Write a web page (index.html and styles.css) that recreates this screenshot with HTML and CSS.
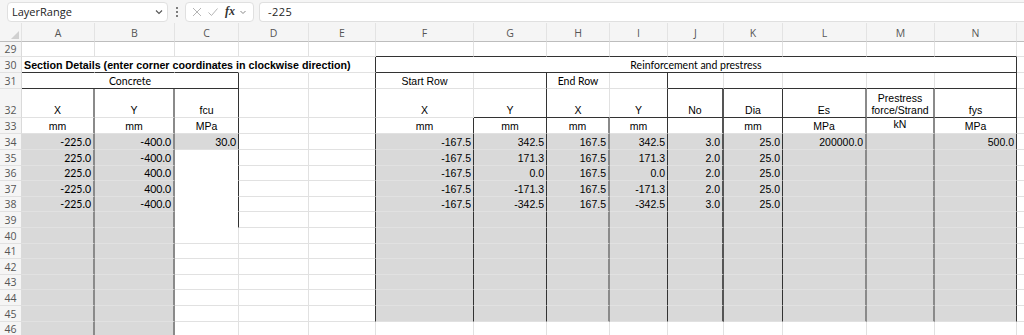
FILE: index.html
```html
<!DOCTYPE html>
<html lang="en">
<head>
    <meta charset="UTF-8">
    <title>LayerRange</title>
    <link rel="stylesheet" href="styles.css">
</head>
<body>

<div class="toolbar">
    <div class="namebox">
        <span>LayerRange</span>
        <svg class="chev" width="10" height="10" viewBox="0 0 10 10"><path d="M2 3.5 L5 6.5 L8 3.5" fill="none" stroke="#555" stroke-width="1.1"/></svg>
    </div>
    <svg class="dots" width="4" height="12" viewBox="0 0 4 12"><circle cx="2" cy="2" r="1"/><circle cx="2" cy="6" r="1"/><circle cx="2" cy="10" r="1"/></svg>
    <div class="fxbox">
        <svg width="12" height="12" viewBox="0 0 12 12"><path d="M2 2 L10 10 M10 2 L2 10" stroke="#b5b5b5" stroke-width="1"/></svg>
        <svg width="12" height="12" viewBox="0 0 12 12"><path d="M1.5 6.5 L4.5 9.5 L10.5 2.5" fill="none" stroke="#b5b5b5" stroke-width="1"/></svg>
        <span class="fx">fx</span>
        <svg width="8" height="8" viewBox="0 0 8 8"><path d="M1.5 3 L4 5.5 L6.5 3" fill="none" stroke="#888" stroke-width="1"/></svg>
    </div>
    <div class="formula">-225</div>
</div>

<table class="sheet">
    <colgroup>
        <col class="c-rh">
        <col style="width:73px"><col style="width:80px"><col style="width:64px"><col style="width:70px"><col style="width:67px">
        <col style="width:98px"><col style="width:73px"><col style="width:63px"><col style="width:58px"><col style="width:56px">
        <col style="width:59px"><col style="width:84px"><col style="width:68px"><col style="width:82px"><col style="width:30px">
    </colgroup>
    <tr class="hdr">
        <th class="corner"><svg width="8" height="8" viewBox="0 0 8 8"><path d="M8 0 L8 8 L0 8 Z" fill="#d0d0d0"/></svg></th>
        <th>A</th><th>B</th><th>C</th><th>D</th><th>E</th><th>F</th><th>G</th><th>H</th>
        <th>I</th><th>J</th><th>K</th><th>L</th><th>M</th><th>N</th><th></th>
    </tr>
    <tr class="r15">
        <th>29</th>
        <td></td><td></td><td></td><td></td><td></td>
        <td class="bb"></td><td class="bb"></td><td class="bb"></td><td class="bb"></td><td class="bb"></td>
        <td class="bb"></td><td class="bb"></td><td class="bb"></td><td class="bb"></td><td></td>
    </tr>
    <tr class="r16">
        <th>30</th>
        <td class="bb nor title">Section Details (enter corner coordinates in clockwise direction)</td>
        <td class="bb nor"></td><td class="bb nor"></td><td class="nor"></td><td class="br"></td>
        <td colspan="9" class="br bb cal center">Reinforcement and prestress</td>
        <td></td>
    </tr>
    <tr class="r16">
        <th>31</th>
        <td colspan="3" class="br bb cal center">Concrete</td>
        <td></td><td class="br"></td>
        <td class="center">Start Row</td><td class="br"></td>
        <td class="cal center">End Row</td><td class="br"></td>
        <td class="bb"></td><td class="bb"></td><td class="bb"></td><td class="bb"></td><td class="bb br"></td>
        <td></td>
    </tr>
    <tr class="r29">
        <th>32</th>
        <td class="bm center">X</td><td class="bm center">Y</td><td class="br center">fcu</td>
        <td></td><td class="br"></td>
        <td class="center">X</td><td class="br bb center">Y</td><td class="bb center">X</td><td class="br bb center">Y</td>
        <td class="bd bb center">No</td><td class="br bb center">Dia</td><td class="bm bb center">Es</td>
        <td class="bm bb center">Prestress<br>force/Strand</td><td class="br bb center">fys</td>
        <td></td>
    </tr>
    <tr class="r16">
        <th>33</th>
        <td class="bm center">mm</td><td class="bm center">mm</td><td class="br center">MPa</td>
        <td></td><td class="br"></td>
        <td class="br center">mm</td><td class="br center">mm</td><td class="bm center">mm</td><td class="br center">mm</td>
        <td class="bd"></td><td class="br center">mm</td><td class="bm center">MPa</td>
        <td class="bm center kn">kN</td><td class="br center">MPa</td>
        <td></td>
    </tr>
    <tr class="r16">
        <th>34</th>
        <td class="fill bm cal num">-225.0</td><td class="fill bm cal num">-400.0</td><td class="fill br cal num">30.0</td>
        <td></td><td class="br"></td>
        <td class="fill br num">-167.5</td><td class="fill br num">342.5</td><td class="fill bm num">167.5</td><td class="fill br num">342.5</td>
        <td class="fill bd num">3.0</td><td class="fill br num">25.0</td><td class="fill bm num">200000.0</td>
        <td class="fill bm"></td><td class="fill br num">500.0</td>
        <td></td>
    </tr>
    <tr class="r15">
        <th>35</th>
        <td class="fill bm cal num">225.0</td><td class="fill bm cal num">-400.0</td><td class="blank br"></td>
        <td></td><td class="br"></td>
        <td class="fill br num">-167.5</td><td class="fill br num">171.3</td><td class="fill bm num">167.5</td><td class="fill br num">171.3</td>
        <td class="fill bd num">2.0</td><td class="fill br num">25.0</td><td class="fill bm"></td>
        <td class="fill bm"></td><td class="fill br"></td>
        <td></td>
    </tr>
    <tr class="r16">
        <th>36</th>
        <td class="fill bm cal num">225.0</td><td class="fill bm cal num">400.0</td><td class="blank br"></td>
        <td></td><td class="br"></td>
        <td class="fill br num">-167.5</td><td class="fill br num">0.0</td><td class="fill bm num">167.5</td><td class="fill br num">0.0</td>
        <td class="fill bd num">2.0</td><td class="fill br num">25.0</td><td class="fill bm"></td>
        <td class="fill bm"></td><td class="fill br"></td>
        <td></td>
    </tr>
    <tr class="r15">
        <th>37</th>
        <td class="fill bm cal num">-225.0</td><td class="fill bm cal num">400.0</td><td class="blank br"></td>
        <td></td><td class="br"></td>
        <td class="fill br num">-167.5</td><td class="fill br num">-171.3</td><td class="fill bm num">167.5</td><td class="fill br num">-171.3</td>
        <td class="fill bd num">2.0</td><td class="fill br num">25.0</td><td class="fill bm"></td>
        <td class="fill bm"></td><td class="fill br"></td>
        <td></td>
    </tr>
    <tr class="r16">
        <th>38</th>
        <td class="fill bm cal num">-225.0</td><td class="fill bm cal num">-400.0</td><td class="blank br"></td>
        <td></td><td class="br"></td>
        <td class="fill br num">-167.5</td><td class="fill br num">-342.5</td><td class="fill bm num">167.5</td><td class="fill br num">-342.5</td>
        <td class="fill bd num">3.0</td><td class="fill br num">25.0</td><td class="fill bm"></td>
        <td class="fill bm"></td><td class="fill br"></td>
        <td></td>
    </tr>
    <tr class="r15">
        <th>39</th>
        <td class="fill bm"></td><td class="fill bm"></td><td class="blank br"></td>
        <td></td><td class="br"></td>
        <td class="fill br"></td><td class="fill br"></td><td class="fill bm"></td><td class="fill br"></td>
        <td class="fill bd"></td><td class="fill br"></td><td class="fill bm"></td><td class="fill bm"></td><td class="fill br"></td>
        <td></td>
    </tr>
    <tr class="r16">
        <th>40</th>
        <td class="fill bm"></td><td class="fill bm"></td><td></td>
        <td></td><td class="br"></td>
        <td class="fill br"></td><td class="fill br"></td><td class="fill bm"></td><td class="fill br"></td>
        <td class="fill bd"></td><td class="fill br"></td><td class="fill bm"></td><td class="fill bm"></td><td class="fill br"></td>
        <td></td>
    </tr>
    <tr class="r15">
        <th>41</th>
        <td class="fill bm"></td><td class="fill bm"></td><td></td>
        <td></td><td class="br"></td>
        <td class="fill br"></td><td class="fill br"></td><td class="fill bm"></td><td class="fill br"></td>
        <td class="fill bd"></td><td class="fill br"></td><td class="fill bm"></td><td class="fill bm"></td><td class="fill br"></td>
        <td></td>
    </tr>
    <tr class="r16">
        <th>42</th>
        <td class="fill bm"></td><td class="fill bm"></td><td></td>
        <td></td><td class="br"></td>
        <td class="fill br"></td><td class="fill br"></td><td class="fill bm"></td><td class="fill br"></td>
        <td class="fill bd"></td><td class="fill br"></td><td class="fill bm"></td><td class="fill bm"></td><td class="fill br"></td>
        <td></td>
    </tr>
    <tr class="r15">
        <th>43</th>
        <td class="fill bm"></td><td class="fill bm"></td><td></td>
        <td></td><td class="br"></td>
        <td class="fill br"></td><td class="fill br"></td><td class="fill bm"></td><td class="fill br"></td>
        <td class="fill bd"></td><td class="fill br"></td><td class="fill bm"></td><td class="fill bm"></td><td class="fill br"></td>
        <td></td>
    </tr>
    <tr class="r16">
        <th>44</th>
        <td class="fill bm"></td><td class="fill bm"></td><td></td>
        <td></td><td class="br"></td>
        <td class="fill br"></td><td class="fill br"></td><td class="fill bm"></td><td class="fill br"></td>
        <td class="fill bd"></td><td class="fill br"></td><td class="fill bm"></td><td class="fill bm"></td><td class="fill br"></td>
        <td></td>
    </tr>
    <tr class="r15">
        <th>45</th>
        <td class="fill bm"></td><td class="fill bm"></td><td></td>
        <td></td><td class="br"></td>
        <td class="fill br last"></td><td class="fill br last"></td><td class="fill bm last"></td><td class="fill br last"></td>
        <td class="fill bd last"></td><td class="fill br last"></td><td class="fill bm last"></td><td class="fill bm last"></td><td class="fill br last"></td>
        <td></td>
    </tr>
    <tr class="r16">
        <th>46</th>
        <td class="fill bm"></td><td class="fill bm"></td><td></td>
        <td></td><td></td>
        <td></td><td></td><td></td><td></td><td></td><td></td><td></td><td></td><td></td>
        <td></td>
    </tr>
</table>

</body>
</html>
```

FILE: styles.css
```css
body {
    margin: 0;
    width: 1024px;
    height: 335px;
    overflow: hidden;
    background-color: #fff;
    font-family: "Liberation Sans", Arial, sans-serif;
    color: #000;
}

/* formula bar */
.toolbar {
    height: 23px;
    display: flex;
    align-items: center;
    background-color: #f5f5f5;
    padding-left: 7px;
    font-family: "Open Sans", "Noto Sans", sans-serif;
    font-size: 11px;
    color: #242424;
}

.namebox {
    width: 152px;
    height: 18px;
    display: flex;
    align-items: center;
    justify-content: space-between;
    padding: 0 3px 0 4px;
    background: #fff;
    border: 1px solid #e0e0e0;
    border-radius: 4px;
}

.dots {
    margin: 0 6px 0 7px;
    fill: #555;
}

.fxbox {
    width: 60px;
    height: 18px;
    display: flex;
    align-items: center;
    gap: 4px;
    padding: 0 2px 0 5px;
    background: #fff;
    border: 1px solid #e0e0e0;
    border-radius: 4px;
}

.fx {
    font-family: "Liberation Serif", serif;
    font-style: italic;
    font-weight: bold;
    font-size: 12px;
    color: #333;
    margin-left: 2px;
}

.formula {
    flex: 1;
    height: 18px;
    margin-left: 5px;
    padding-left: 8px;
    line-height: 18px;
    background: #fff;
    border: 1px solid #e0e0e0;
    border-right: none;
    border-radius: 4px 0 0 4px;
    letter-spacing: 0.5px;
}

/* grid */
.sheet {
    border-collapse: separate;
    border-spacing: 0;
    table-layout: fixed;
    width: 1047px;
}

.c-rh {
    width: 22px;
}

.sheet th {
    background-color: #f5f5f5;
    border-right: 1px solid #dadada;
    border-bottom: 1px solid #e1e1e1;
    font-family: "Open Sans", "Noto Sans", sans-serif;
    font-weight: normal;
    font-size: 10.5px;
    color: #555;
    padding: 0 0 1px 0;
    text-align: center;
    vertical-align: bottom;
    line-height: 12px;
}

.hdr {
    height: 19px;
}

.hdr th {
    padding: 0 0 2px 0;
    border-bottom: 1px solid #bdbdbd;
    border-right: 1px solid #e3e3e3;
}

.corner {
    text-align: right !important;
}

.corner svg {
    display: block;
    margin: 0 2px 0 auto;
}

.sheet td {
    border-right: 1px solid #e1e1e1;
    border-bottom: 1px solid #e1e1e1;
    padding: 0 2px 1px 2px;
    font-size: 10.5px;
    line-height: 12px;
    white-space: nowrap;
    vertical-align: bottom;
    overflow: hidden;
}

.r15 { height: 15.6px; }
.r16 { height: 15.6px; }
.r29 { height: 29px; }

.sheet tr:nth-child(2) { height: 15px; }
.sheet tr:nth-child(3),
.sheet tr:nth-child(4),
.sheet tr:nth-child(6),
.sheet tr:nth-child(7) { height: 16px; }

.title {
    overflow: visible !important;
    font-weight: bold;
    font-size: 10.7px !important;
}

.nor { border-right-color: #fff !important; }

.center { text-align: center; }
.num { text-align: right; }

.cal {
    font-family: Lato, "Open Sans", sans-serif;
    font-size: 10.8px;
}

.kn {
    vertical-align: top !important;
    padding-top: 2px;
}

.bb { border-bottom: 1px solid #333 !important; }
.br { border-right: 1px solid #333 !important; }
.bd { border-right: 2px solid #555 !important; }
.bm { border-right: 2px solid #8a8a8a !important; }

.fill {
    background-color: #d9d9d9;
    border-bottom-color: #d9d9d9;
}

.blank { border-bottom-color: #fff; }

.last { border-bottom-color: #d9d9d9; }

.sheet td.blank.br { border-bottom-color: #fff; }
```
